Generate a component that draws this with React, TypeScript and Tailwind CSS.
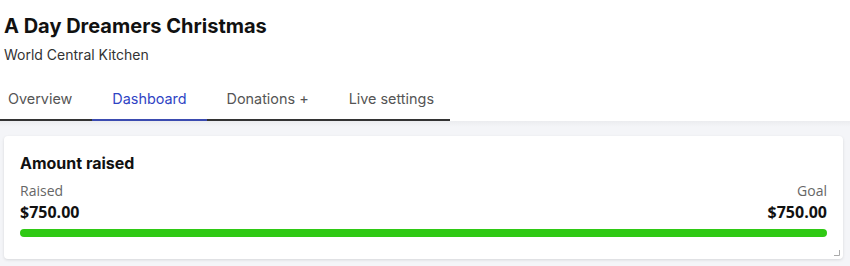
export default function App() {
  const tabs = [
    { label: 'Overview', active: false, pad: 'pl-2 pr-5' },
    { label: 'Dashboard', active: true, pad: 'px-5' },
    { label: 'Donations +', active: false, pad: 'px-5' },
    { label: 'Live settings', active: false, pad: 'px-5' },
  ];

  return (
    <div className="w-[850px] h-[266px] bg-[#f4f5f8] font-['Inter',sans-serif] overflow-hidden">
      {/* Header */}
      <div className="bg-white">
        <div className="px-1 pt-[12px]">
          <h1 className="text-[20px] leading-[28px] font-bold text-[#111]">A Day Dreamers Christmas</h1>
          <p className="text-[14px] leading-[20px] mt-[5px] text-[#333]">World Central Kitchen</p>
        </div>
        {/* Tabs */}
        <div className="flex w-[450px] border-b-2 border-[#333] mt-[24px]">
          {tabs.map((t) => (
            <div
              key={t.label}
              className={`${t.pad} shrink-0 whitespace-nowrap pb-[10px] text-[14.4px] leading-[20px] -mb-[2px] border-b-2 ${
                t.active ? 'text-[#2f44c4] border-[#3b4bb0]' : 'text-[#555] border-transparent'
              }`}
            >
              {t.label}
            </div>
          ))}
        </div>
      </div>

      {/* Content */}
      <div className="px-1 pt-[15px] bg-gradient-to-b from-[#ebecef] to-[#f4f5f8] bg-no-repeat [background-size:100%_6px]">
        <div className="relative w-[839px] h-[123px] bg-white rounded-[4px] shadow-[0_1px_3px_rgba(0,0,0,0.12)] px-4 pt-[16px]">
          <h2 className="text-[16px] leading-[22px] font-bold text-[#111]">Amount raised</h2>
          <div className="flex justify-between mt-[8px] font-['Open_Sans',sans-serif]">
            <div>
              <div className="text-[14px] leading-[18px] text-[#666]">Raised</div>
              <div className="text-[16px] leading-[24px] font-bold text-[#111]">$750.00</div>
            </div>
            <div className="text-right">
              <div className="text-[14px] leading-[18px] text-[#666]">Goal</div>
              <div className="text-[16px] leading-[24px] font-bold text-[#111]">$750.00</div>
            </div>
          </div>
          <div className="mt-[5px] h-[8px] rounded-full bg-[#2fc914]" />
          <svg className="absolute right-[3px] bottom-[3px]" width="6" height="6" viewBox="0 0 6 6">
            <path d="M5.5 0 V5.5 H0" fill="none" stroke="#aaa" strokeWidth="1" />
          </svg>
        </div>
      </div>
    </div>
  );
}
